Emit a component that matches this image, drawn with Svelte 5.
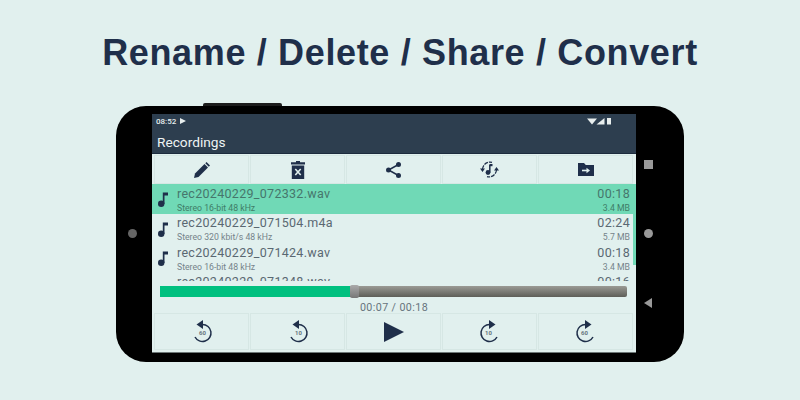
<script>
	const tools = ['edit', 'delete', 'share', 'convert', 'move'];
	const transport = [
		{ kind: 'back', label: '60' },
		{ kind: 'back', label: '10' },
		{ kind: 'play' },
		{ kind: 'fwd', label: '10' },
		{ kind: 'fwd', label: '60' }
	];
	const recordings = [
		{ name: 'rec20240229_072332.wav', info: 'Stereo 16-bit 48 kHz', time: '00:18', size: '3.4 MB', active: true },
		{ name: 'rec20240229_071504.m4a', info: 'Stereo 320 kbit/s 48 kHz', time: '02:24', size: '5.7 MB' },
		{ name: 'rec20240229_071424.wav', info: 'Stereo 16-bit 48 kHz', time: '00:18', size: '3.4 MB' },
		{ name: 'rec20240229_071348.wav', info: 'Stereo 16-bit 48 kHz', time: '00:16', size: '3.0 MB' }
	];
	const progress = 40.7; // percent of the seek bar, thumb sits at the edge
</script>

<div class="page">
	<h1>Rename / Delete / Share / Convert</h1>

	<div class="phone">
		<div class="power"></div>
		<div class="left-rail"><span class="camera"></span></div>

		<div class="screen">
			<div class="status">
				<span class="clock">08:52</span>
				<svg class="status-play" viewBox="0 0 6 6"><path d="M0 0l6 3-6 3z" /></svg>
				<span class="spacer"></span>
				<svg class="status-icons" viewBox="0 0 24 8">
					<path d="M0 1.500h10L5 7.500z" />
					<path d="M9.500 7.500L17.500 1v6.500z" />
					<rect x="20" y="1" width="4" height="6.500" />
				</svg>
			</div>
			<div class="appbar">Recordings</div>

			<div class="toolbar">
				{#each tools as tool}
					<div class="btn">
						{#if tool === 'edit'}
							<svg width="16" height="16" viewBox="0 0 16 16">
								<path d="M0 16l1-4.500L10.500 2l3.500 3.500L4.500 15z" />
								<path d="M11.300 1.200L12.500 0 16 3.500 14.800 4.700z" />
							</svg>
						{:else if tool === 'delete'}
							<svg width="14" height="18" viewBox="0 0 14 18">
								<path d="M5 0h4v1.300h5V3.500H0V1.300h5z" />
								<path d="M.8 4.500h12.400V18H.8z" />
								<path class="cut" d="M4.300 8l5.400 6M9.700 8l-5.400 6" />
							</svg>
						{:else if tool === 'share'}
							<svg width="15" height="16" viewBox="0 0 15 16">
								<circle cx="2.500" cy="8" r="2.500" />
								<circle cx="12.500" cy="2.500" r="2.500" />
								<circle cx="12.500" cy="13.500" r="2.500" />
								<path class="line" d="M12.500 2.500L2.500 8l10 5.500" />
							</svg>
						{:else if tool === 'convert'}
							<svg width="19" height="19" viewBox="0 0 19 19">
								<path class="arc thin" d="M2.500 9A7.500 7.500 0 0 1 12 2.400" />
								<path class="arc thin" d="M16.500 10A7.500 7.500 0 0 1 7 16.600" />
								<path d="M0 8.500h5l-2.500 3.500zM14 10.500h5l-2.500-3.500z" />
								<path class="line" d="M9.800 4.500v8" />
								<circle cx="8" cy="12.500" r="2.400" />
								<path d="M9.800 4h2.700v2.200H9.800z" />
							</svg>
						{:else}
							<svg width="16" height="13" viewBox="0 0 16 13">
								<path d="M0 0h6l1.800 2H16v11H0z" />
								<path class="cut" d="M4 7.500h5" />
								<path class="arrow" d="M8.500 4.700l3.500 2.800-3.500 2.800z" />
							</svg>
						{/if}
					</div>
				{/each}
			</div>

			<div class="list">
				{#each recordings as rec}
					<div class="row" class:active={rec.active}>
						<svg class="note" width="10" height="15" viewBox="0 0 10 15">
							<circle cx="3.200" cy="11.700" r="3.200" />
							<path d="M4.800 .5H10v3H6.500v8.500H4.800z" />
						</svg>
						<div class="rec-main">
							<div class="rec-name">{rec.name}</div>
							<div class="rec-info">{rec.info}</div>
						</div>
						<div class="rec-side">
							<div class="rec-time">{rec.time}</div>
							<div class="rec-info">{rec.size}</div>
						</div>
					</div>
				{/each}
				<div class="scrollbar"></div>
			</div>

			<div class="seek">
				<div class="seek-done" style="width: {progress}%"></div>
				<div class="seek-rest"></div>
				<div class="thumb" style="left: {progress}%"></div>
			</div>
			<div class="elapsed">00:07 / 00:18</div>

			<div class="toolbar bottom">
				{#each transport as t}
					<div class="btn">
						{#if t.kind === 'play'}
							<svg width="20" height="20" viewBox="0 0 20 20"><path d="M0 0l20 10L0 20z" /></svg>
						{:else}
							<div class="skip" class:fwd={t.kind === 'fwd'}>
								<svg width="20" height="24" viewBox="0 0 20 24">
									<path class="arc" d="M9.500 5.500A8.500 8.500 0 1 1 2 18" />
									<path d="M10 1v9L3.500 5.500z" />
								</svg>
								<span class="skip-label">{t.label}</span>
							</div>
						{/if}
					</div>
				{/each}
			</div>
		</div>

		<div class="right-rail">
			<span class="nav-square"></span>
			<span class="nav-circle"></span>
			<span class="nav-back"></span>
		</div>
	</div>
</div>

<style>
	:global(body) {
		margin: 0;
		background: #e1f0ee;
	}

	.page {
		width: 800px;
		height: 400px;
		overflow: hidden;
		display: flex;
		flex-direction: column;
		align-items: center;
		font-family: 'Roboto', 'Liberation Sans', sans-serif;
	}

	h1 {
		margin: 33px 0 0;
		height: 40px;
		line-height: 40px;
		font-family: 'Liberation Sans', Arial, sans-serif;
		font-size: 36px;
		font-weight: 700;
		letter-spacing: 0.650px;
		color: #1f2f4a;
		white-space: nowrap;
	}

	.phone {
		position: relative;
		margin-top: 33px;
		width: 568px;
		height: 256px;
		box-sizing: border-box;
		padding: 8px 0 9px;
		background: #000;
		border-radius: 30px;
		display: flex;
	}

	.power {
		position: absolute;
		left: 87px;
		top: -3px;
		width: 79px;
		height: 3px;
		background: #1c1c1c;
		border-radius: 2px 2px 0 0;
	}

	.left-rail {
		width: 36px;
		display: flex;
		align-items: center;
		justify-content: center;
		padding-right: 4px;
		box-sizing: border-box;
	}

	.camera {
		width: 9px;
		height: 9px;
		border-radius: 50%;
		background: #666;
	}

	.right-rail {
		flex: 1;
		display: flex;
		flex-direction: column;
		align-items: center;
		justify-content: space-between;
		padding: 46px 24px 45px 0;
		box-sizing: border-box;
	}

	.nav-square {
		width: 9px;
		height: 9px;
		background: #999;
	}

	.nav-circle {
		width: 9px;
		height: 9px;
		border-radius: 50%;
		background: #999;
	}

	.nav-back {
		width: 0;
		height: 0;
		border-style: solid;
		border-width: 5px 8px 5px 0;
		border-color: transparent #999 transparent transparent;
	}

	.screen {
		width: 484px;
		background: #e1f0ee;
		border-bottom: 1px solid #6d7777;
		display: flex;
		flex-direction: column;
		overflow: hidden;
	}

	.status {
		height: 14px;
		background: #2d3e4f;
		color: #e8eeee;
		display: flex;
		align-items: center;
		padding: 0 25px 0 4px;
		font-size: 8px;
		font-weight: 500;
	}

	.status-play {
		width: 6px;
		height: 6px;
		margin-left: 4px;
		fill: #e8eeee;
	}

	.spacer {
		flex: 1;
	}

	.status-icons {
		width: 24px;
		height: 8px;
		fill: #e8eeee;
	}

	.appbar {
		height: 26px;
		box-sizing: border-box;
		background: #2d3e4f;
		border-bottom: 1px solid #1c2b3d;
		color: #eef3f3;
		font-size: 13.700px;
		line-height: 28px;
		padding-left: 5px;
		overflow: hidden;
	}

	.toolbar {
		display: grid;
		grid-template-columns: repeat(5, 1fr);
		gap: 3px;
		height: 30px;
		padding: 2px 4px 1px 3px;
		box-sizing: border-box;
	}

	.toolbar.bottom {
		height: 35px;
		padding: 0 4px 0 3px;
	}

	.btn {
		background: #e1f0ee;
		box-shadow: 0 0 0 1px #d6e7e4;
		display: flex;
		align-items: center;
		justify-content: center;
	}

	.btn svg {
		fill: #1f2f4a;
	}

	.btn .line,
	.btn .arc {
		fill: none;
		stroke: #1f2f4a;
		stroke-width: 1.500;
	}

	.btn .arc.thin {
		stroke-width: 1.200;
		stroke-dasharray: 4 1;
	}

	.btn .cut {
		fill: none;
		stroke: #e1f0ee;
		stroke-width: 1.600;
	}

	.btn .arrow {
		fill: #e1f0ee;
	}

	.list {
		position: relative;
		height: 97px;
		overflow: hidden;
	}

	.row {
		height: 29.500px;
		display: flex;
		align-items: center;
		padding: 1px 6px 0 6px;
		box-sizing: border-box;
	}

	.row.active {
		background: #70d9b6;
	}

	.note {
		flex: none;
		fill: #1f2f4a;
		margin-right: 9px;
		margin-top: 1px;
	}

	.rec-main {
		flex: 1;
	}

	.rec-side {
		text-align: right;
	}

	.rec-name,
	.rec-time {
		font-size: 12.500px;
		line-height: 16px;
		color: #5a6872;
		letter-spacing: 0.300px;
	}

	.rec-info {
		font-size: 8.700px;
		line-height: 10px;
		color: #75838a;
		margin-top: 1px;
	}

	.row.active .rec-name,
	.row.active .rec-time {
		color: #46766c;
	}

	.row.active .rec-info {
		color: #3f7d68;
	}

	.scrollbar {
		position: absolute;
		right: 0;
		top: 0;
		width: 3px;
		height: 81px;
		background: #70d9b6;
	}

	.seek {
		position: relative;
		margin: 5px 9px 0 8px;
		height: 11px;
		display: flex;
	}

	.seek-done {
		background: #00c07f;
		flex: none;
	}

	.seek-rest {
		flex: 1;
		background: linear-gradient(#9a9a94, #5e5e58);
		border-radius: 0 2px 2px 0;
	}

	.thumb {
		position: absolute;
		top: -1px;
		bottom: -1px;
		width: 9px;
		background: linear-gradient(#aaa, #777);
		border-radius: 2px;
	}

	.elapsed {
		height: 13px;
		margin-top: 4px;
		text-align: center;
		font-size: 10.700px;
		line-height: 13px;
		letter-spacing: 0.400px;
		color: #67747d;
	}

	.skip {
		position: relative;
		width: 20px;
		height: 24px;
		margin: -2px 0 0 2px;
	}

	.skip.fwd {
		margin-left: 0;
		margin-right: 2px;
	}

	.skip.fwd svg {
		transform: scaleX(-1);
	}

	.skip-label {
		position: absolute;
		left: 0;
		right: 0;
		top: 10px;
		text-align: center;
		font-size: 6px;
		font-weight: 700;
		line-height: 8px;
		color: #67747d;
	}
</style>
